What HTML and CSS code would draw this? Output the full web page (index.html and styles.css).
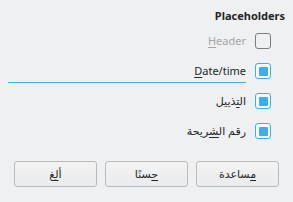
FILE: index.html
```html
<!DOCTYPE html>
<html lang="ar" dir="rtl">
<head>
<meta charset="utf-8">
<link rel="stylesheet" href="styles.css">
</head>
<body>
<div class="dialog">
  <div class="title">Placeholders</div>
  <div class="rows">
    <div class="row">
      <span class="check"></span>
      <span class="label disabled"><span dir="ltr"><u>H</u>eader</span></span>
    </div>
    <div class="row">
      <span class="check on"><span class="fill"></span></span>
      <span class="label focus"><span dir="ltr"><u>D</u>ate/time</span></span>
    </div>
    <div class="row">
      <span class="check on"><span class="fill"></span></span>
      <span class="label">ال<u>ت</u>ذييل</span>
    </div>
    <div class="row">
      <span class="check on"><span class="fill"></span></span>
      <span class="label">رقم ال<u>ش</u>ريحة</span>
    </div>
  </div>
  <div class="buttons">
    <button class="btn"><u>م</u>ساعدة</button>
    <button class="btn"><u>ح</u>سنًا</button>
    <button class="btn">أ<u>ل</u>غ</button>
  </div>
</div>
</body>
</html>
```
FILE: styles.css
```css
html, body {
  margin: 0;
  padding: 0;
  background: #eff0f1;
}
body {
  width: 293px;
  height: 202px;
  overflow: hidden;
  font-family: "Noto Sans", "DejaVu Sans", sans-serif;
  font-size: 11px;
  color: #232627;
}
.dialog {
  padding-top: 8px;
}
.title {
  font-weight: bold;
  line-height: 16px;
  height: 16px;
  padding: 0 8px;
  text-align: right;
  direction: ltr;
}
.rows {
  margin-top: 2px;
  padding: 0 22px 0 8px;
  direction: rtl;
}
.row {
  display: flex;
  align-items: center;
  height: 30px;
  gap: 9px;
}
.check {
  flex: none;
  box-sizing: border-box;
  width: 16px;
  height: 16px;
  border: 1px solid #7b7d7e;
  border-radius: 3px;
  display: flex;
  align-items: center;
  justify-content: center;
}
.check.on {
  border-color: #3daee9;
  background: #f4f9fd;
}
.fill {
  width: 9px;
  height: 9px;
  background: #3daee9;
  border-radius: 1px;
}
.label {
  flex: 1;
  align-self: flex-start;
  box-sizing: border-box;
  height: 27px;
  padding-top: 4px;
  line-height: 22px;
  border-bottom: 1px solid transparent;
  text-align: right;
  white-space: nowrap;
}
.label.focus {
  border-bottom-color: #3daee9;
}
.label.disabled {
  color: #a3a5a6;
}
u {
  text-decoration: underline;
  text-underline-offset: 2px;
}
.buttons {
  margin-top: 15px;
  padding: 0 14px;
  display: flex;
  gap: 8px;
}
.btn {
  flex: 1;
  height: 26px;
  box-sizing: border-box;
  border: 1px solid #b9bbbc;
  border-radius: 3px;
  background: linear-gradient(#f3f3f4, #eaebec);
  font-family: "DejaVu Sans", sans-serif;
  font-size: 11px;
  color: #232627;
  padding: 0;
  margin: 0;
}
```
